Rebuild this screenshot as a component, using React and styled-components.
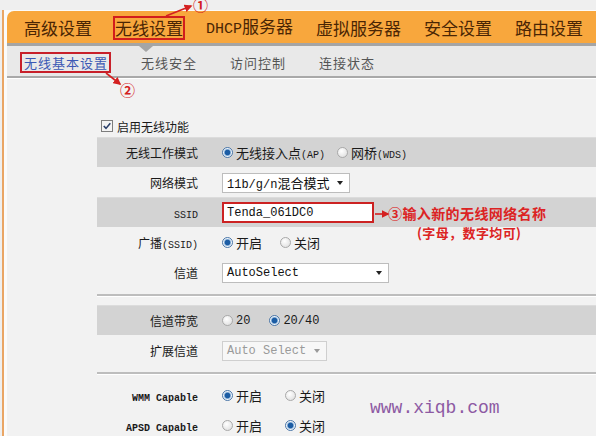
import React from "react";
import styled, { createGlobalStyle } from "styled-components";

const GlobalStyle = createGlobalStyle`
  html, body {
    margin: 0;
    padding: 0;
    background: #efefef;
  }
  body {
    font-family: "Noto Sans CJK SC", "Liberation Sans", sans-serif;
  }
`;

const Page = styled.div`
  position: relative;
  width: 596px;
  height: 436px;
  overflow: hidden;
  box-sizing: border-box;
  padding-top: 10px;
  background: #efefef;
`;

const Frame = styled.div`
  height: 100%;
  margin-left: 2px;
  padding: 1px 0 0 3px;
  border-left: 2px solid #eaa665;
  background: #fbfbfb;
  display: flex;
  flex-direction: column;
`;

const NavBar = styled.div`
  height: 35px;
  box-sizing: border-box;
  padding: 2px 0 0 17px;
  display: flex;
  align-items: center;
  gap: 23px;
  background: #f8a73d;
  border-top-left-radius: 7px;
  border-bottom: 3px solid #a5a5a5;
  flex: none;
`;

const NavItem = styled.span`
  position: relative;
  font-size: 17px;
  line-height: 20px;
  font-weight: 400;
  color: #4a2504;
  white-space: nowrap;
  outline: ${(p) => (p.$marked ? "2px solid #d21d1d" : "none")};
  &::after {
    content: "";
    display: ${(p) => (p.$active ? "block" : "none")};
    position: absolute;
    left: 50%;
    top: calc(100% + 8px);
    margin-left: -10px;
    border-top: 6px solid #a5a5a5;
    border-left: 7px solid transparent;
    border-right: 7px solid transparent;
  }
`;

const NavMono = styled.span`
  font-family: "Liberation Mono", monospace;
  font-size: 15px;
`;

const SubNav = styled.div`
  height: 32px;
  box-sizing: border-box;
  padding: 3px 0 0 16px;
  display: flex;
  align-items: center;
  gap: 32px;
  background: #e9e9e9;
  border-bottom: 2px solid #a9a9a9;
  flex: none;
`;

const SubItem = styled.span`
  font-size: 13px;
  line-height: 15px;
  letter-spacing: 1px;
  color: ${(p) => (p.$active ? "#3b58b4" : "#555555")};
  outline: ${(p) => (p.$active ? "2px solid #c8202a" : "none")};
  outline-offset: 1px;
  padding-left: 1px;
`;

const Content = styled.div`
  flex: 1;
  background: #f2f2f2;
  border-top: 1px solid #ffffff;
  padding: 36px 0 0 90px;
`;

const CheckRow = styled.div`
  height: 22px;
  display: flex;
  align-items: center;
  gap: 4px;
  padding-left: 4px;
  font-size: 12px;
  color: #1a1a1a;
`;

const Form = styled.div`
  display: flex;
  flex-direction: column;
`;

const Row = styled.div`
  display: grid;
  grid-template-columns: 101px 1fr;
  align-items: center;
  height: 30px;
  background: ${(p) => (p.$band ? "#d3d3d3" : "transparent")};
  border-top: 1px solid ${(p) => (p.$band ? "#dcdcdc" : "transparent")};
  box-sizing: border-box;
`;

const Label = styled.div`
  text-align: right;
  font-size: 12px;
  color: #1a1a1a;
  white-space: nowrap;
`;

const Value = styled.div`
  padding-left: 24px;
  display: flex;
  align-items: center;
  gap: ${(p) => p.$gap || 18}px;
`;

const Mono = styled.span`
  font-family: "Liberation Mono", monospace;
  font-size: ${(p) => p.$size || 10}px;
  font-weight: ${(p) => (p.$bold ? 700 : 400)};
`;

const Divider = styled.div`
  height: 0;
  margin: 7px 0 ${(p) => p.$after || 8}px;
  border-top: 2px solid #bdbdbd;
  border-bottom: 1px solid #ffffff;
`;

const Option = styled.label`
  display: flex;
  align-items: center;
  gap: 3px;
  font-size: 13px;
  color: #1a1a1a;
  white-space: nowrap;
`;

const RadioDot = styled.span`
  width: 11px;
  height: 11px;
  flex: none;
  box-sizing: border-box;
  border-radius: 50%;
  border: 1px solid ${(p) => (p.$checked ? "#4a76a8" : "#a9a9a9")};
  background: ${(p) =>
    p.$checked
      ? "radial-gradient(circle, #1b5ca4 0 2.4px, #86aed6 3.1px, #eef4fa 4px)"
      : "radial-gradient(circle at 40% 35%, #ffffff, #dadada)"};
`;

const Select = styled.div`
  width: ${(p) => p.$width}px;
  height: 20px;
  box-sizing: border-box;
  padding: 0 6px 0 4px;
  display: flex;
  align-items: center;
  justify-content: space-between;
  background: ${(p) => (p.$disabled ? "#f7f7f7" : "#ffffff")};
  border: 1px solid ${(p) => (p.$disabled ? "#cfcfcf" : "#bdbdbd")};
  color: ${(p) => (p.$disabled ? "#9a9a9a" : "#111111")};
  font-size: 13px;
  white-space: nowrap;
  &::after {
    content: "";
    border-top: 4px solid ${(p) => (p.$disabled ? "#9a9a9a" : "#222222")};
    border-left: 3.5px solid transparent;
    border-right: 3.5px solid transparent;
  }
`;

const TextInput = styled.div`
  width: 152px;
  height: 21px;
  box-sizing: border-box;
  padding-left: 3px;
  display: flex;
  align-items: center;
  background: #ffffff;
  border: 2px solid #cc2222;
  font-family: "Liberation Mono", monospace;
  font-size: 12px;
  color: #111111;
`;

const Note = styled.div`
  position: absolute;
  left: 388px;
  top: 204px;
  display: flex;
  flex-direction: column;
  align-items: center;
  font-size: 14px;
  line-height: 19px;
  font-weight: 700;
  color: #dc2323;
  letter-spacing: 0.4px;
`;

const NoteSub = styled.span`
  font-size: 13px;
  padding-left: 4px;
`;

const Step = styled.span`
  position: absolute;
  left: ${(p) => p.$x}px;
  top: ${(p) => p.$y}px;
  font-size: 15px;
  line-height: 15px;
  font-weight: 700;
  color: #d42020;
`;

const Watermark = styled.span`
  position: absolute;
  left: 370px;
  top: 398px;
  font-family: "Liberation Mono", monospace;
  font-size: 18px;
  color: #8d5aa3;
`;

const Overlay = styled.svg`
  position: absolute;
  left: 0;
  top: 0;
  pointer-events: none;
`;

function Radio({ checked, children }) {
  return (
    <Option>
      <RadioDot $checked={checked} />
      {children}
    </Option>
  );
}

function CheckBox() {
  return (
    <svg width="12" height="12" viewBox="0 0 12 12">
      <rect x="0.5" y="0.5" width="11" height="11" fill="#f4f4f4" stroke="#7d7d7d" />
      <path d="M2.8 6 L5 8.4 L9.3 3.3" fill="none" stroke="#2a3f6a" strokeWidth="1.6" />
    </svg>
  );
}

export default function App() {
  return (
    <>
      <GlobalStyle />
      <Page>
        <Frame>
          <NavBar>
            <NavItem>高级设置</NavItem>
            <NavItem $marked $active>无线设置</NavItem>
            <NavItem>
              <NavMono>DHCP</NavMono>服务器
            </NavItem>
            <NavItem>虚拟服务器</NavItem>
            <NavItem>安全设置</NavItem>
            <NavItem>路由设置</NavItem>
          </NavBar>
          <SubNav>
            <SubItem $active>无线基本设置</SubItem>
            <SubItem>无线安全</SubItem>
            <SubItem>访问控制</SubItem>
            <SubItem>连接状态</SubItem>
          </SubNav>
          <Content>
            <CheckRow>
              <CheckBox />
              启用无线功能
            </CheckRow>
            <Form>
              <Row $band>
                <Label>无线工作模式</Label>
                <Value $gap={12}>
                  <Radio checked>
                    <span>
                      无线接入点<Mono>(AP)</Mono>
                    </span>
                  </Radio>
                  <Radio>
                    <span>
                      网桥<Mono>(WDS)</Mono>
                    </span>
                  </Radio>
                </Value>
              </Row>
              <Row>
                <Label>网络模式</Label>
                <Value>
                  <Select $width={128}>
                    <span>
                      <Mono $size={12}>11b/g/n</Mono>混合模式
                    </span>
                  </Select>
                </Value>
              </Row>
              <Row $band>
                <Label>
                  <Mono>SSID</Mono>
                </Label>
                <Value>
                  <TextInput>Tenda_061DC0</TextInput>
                </Value>
              </Row>
              <Row>
                <Label>
                  广播<Mono>(SSID)</Mono>
                </Label>
                <Value>
                  <Radio checked>开启</Radio>
                  <Radio>关闭</Radio>
                </Value>
              </Row>
              <Row>
                <Label>信道</Label>
                <Value>
                  <Select $width={167}>
                    <Mono $size={12}>AutoSelect</Mono>
                  </Select>
                </Value>
              </Row>
              <Divider />
              <Row $band>
                <Label>信道带宽</Label>
                <Value $gap={19}>
                  <Radio>
                    <Mono $size={12}>20</Mono>
                  </Radio>
                  <Radio checked>
                    <Mono $size={12}>20/40</Mono>
                  </Radio>
                </Value>
              </Row>
              <Row>
                <Label>扩展信道</Label>
                <Value>
                  <Select $width={105} $disabled>
                    <Mono $size={12}>Auto Select</Mono>
                  </Select>
                </Value>
              </Row>
              <Divider $after={5} />
              <Row>
                <Label>
                  <Mono $bold>WMM Capable</Mono>
                </Label>
                <Value $gap={23}>
                  <Radio checked>开启</Radio>
                  <Radio>关闭</Radio>
                </Value>
              </Row>
              <Row>
                <Label>
                  <Mono $bold>APSD Capable</Mono>
                </Label>
                <Value $gap={23}>
                  <Radio>开启</Radio>
                  <Radio checked>关闭</Radio>
                </Value>
              </Row>
            </Form>
          </Content>
        </Frame>

        <Overlay width="596" height="436" viewBox="0 0 596 436">
          <defs>
            <marker id="head" viewBox="0 0 10 10" refX="8" refY="5" markerWidth="5" markerHeight="5" orient="auto">
              <path d="M0,0 L10,5 L0,10 z" fill="#d42020" />
            </marker>
          </defs>
          <line x1="166" y1="16" x2="191" y2="6" stroke="#d42020" strokeWidth="1.6" markerEnd="url(#head)" />
          <line x1="106" y1="73" x2="120" y2="84" stroke="#d42020" strokeWidth="1.6" markerEnd="url(#head)" />
          <line x1="375" y1="214" x2="388" y2="214" stroke="#d42020" strokeWidth="1.6" markerEnd="url(#head)" />
        </Overlay>
        <Step $x={193} $y={-3}>①</Step>
        <Step $x={120} $y={82}>②</Step>
        <Note>
          <span>③输入新的无线网络名称</span>
          <NoteSub>(字母，数字均可)</NoteSub>
        </Note>
        <Watermark>www.xiqb.com</Watermark>
      </Page>
    </>
  );
}
